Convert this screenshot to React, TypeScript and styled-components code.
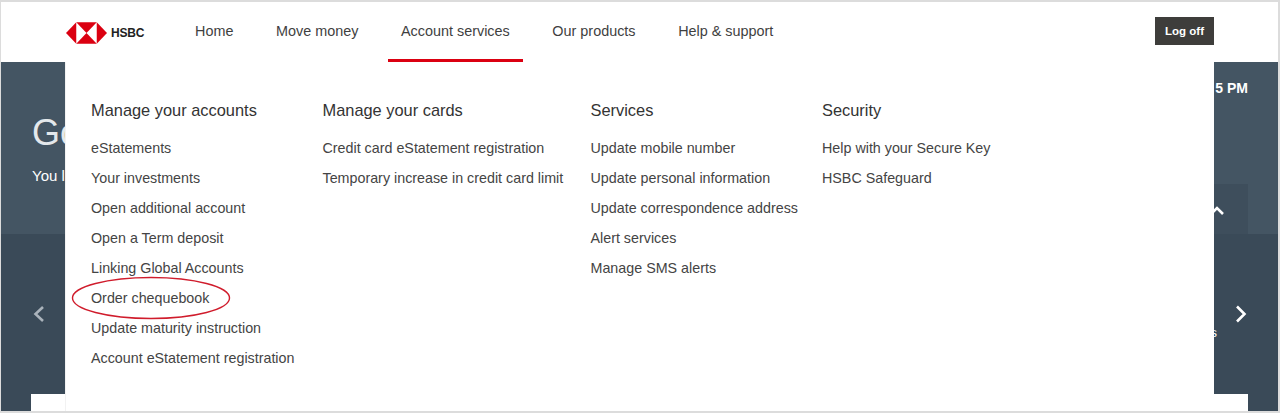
import React from 'react';
import styled, { createGlobalStyle } from 'styled-components';

const GlobalStyle = createGlobalStyle`
  html, body {
    margin: 0;
    padding: 0;
    background: #fff;
  }
  * {
    box-sizing: border-box;
  }
`;

const Frame = styled.div`
  position: relative;
  width: 1280px;
  height: 413px;
  overflow: hidden;
  display: flex;
  flex-direction: column;
  border: 2px solid #dcdcdc;
  border-width: 2px 2px 2px 1px;
  font-family: 'Liberation Sans', Arial, sans-serif;
  color: #333;
`;

const Header = styled.header`
  flex: 0 0 60px;
  display: flex;
  align-items: stretch;
  padding: 0 64px 0 64px;
  background: #fff;
`;

const LogoLink = styled.div`
  width: 117px;
  display: flex;
  align-items: center;
  gap: 4px;
  padding: 2px 0 0 1px;
`;

const LogoText = styled.span`
  font-size: 12px;
  font-weight: 700;
  color: #222;
  letter-spacing: -0.2px;
`;

const Nav = styled.nav`
  display: flex;
  gap: 16.6px;
  flex: 1;
`;

const NavItem = styled.div<{ $active?: boolean }>`
  display: flex;
  align-items: center;
  padding: 1px 13px 0;
  font-size: 14.4px;
  color: #3f3f3f;
  border-bottom: 3px solid ${props => (props.$active ? '#db0011' : 'transparent')};
`;

const LogOff = styled.button`
  align-self: flex-start;
  margin-top: 15px;
  width: 59px;
  height: 28px;
  border: 0;
  padding: 0;
  background: #3e3d3b;
  color: #fff;
  font-family: inherit;
  font-size: 11.5px;
  font-weight: 700;
`;

const Hero = styled.section`
  flex: 1;
  display: flex;
  flex-direction: column;
  background: #3a4a58;
  color: #fff;
`;

const Greeting = styled.div`
  flex: 0 0 172px;
  display: flex;
  justify-content: space-between;
  padding: 0 30px 0 31px;
  background: #445563;
`;

const GreetingLeft = styled.div`
  padding-top: 49px;
`;

const Title = styled.div`
  font-size: 36px;
  font-weight: 300;
  line-height: 44px;
  color: #e4e8eb;
`;

const Subtitle = styled.div`
  margin-top: 12px;
  font-size: 15px;
`;

const GreetingRight = styled.div`
  display: flex;
  flex-direction: column;
  align-items: flex-end;
`;

const Clock = styled.div`
  margin-top: 18px;
  font-size: 14px;
  font-weight: 700;
`;

const Collapse = styled.div`
  margin-top: 88px;
  width: 120px;
  height: 50px;
  display: flex;
  align-items: center;
  justify-content: flex-end;
  padding: 3px 22px 0 0;
  background: #3e4e5c;
`;

const Carousel = styled.div`
  flex: 1;
  display: flex;
  flex-direction: column;
  padding: 0 30px;
`;

const ArrowRow = styled.div`
  position: relative;
  flex: 1;
  display: flex;
  align-items: center;
  justify-content: space-between;
  margin: 0 -2px 0 -1px;
`;

const PeekLabel = styled.span`
  position: absolute;
  right: 33px;
  top: 91px;
  font-size: 13px;
  color: #fff;
`;

const CardTop = styled.div`
  flex: 0 0 17px;
  background: #fff;
`;

const Menu = styled.div`
  position: absolute;
  left: 64px;
  top: 60px;
  width: 1149px;
  height: 351px;
  display: grid;
  grid-template-columns: 231.5px 268px 231.5px 1fr;
  padding: 38px 0 0 25px;
  background: #fff;
  border-left: 1px solid #f2f2f2;
`;

const Column = styled.div`
  display: flex;
  flex-direction: column;
`;

const ColumnTitle = styled.div`
  font-size: 16.4px;
  line-height: 20px;
  color: #333;
  margin-bottom: 13px;
`;

const MenuLink = styled.a`
  font-size: 14.3px;
  line-height: 30px;
  color: #444;
`;

const Annotation = styled.svg`
  position: absolute;
  left: 70px;
  top: 274px;
`;

const Chevron = ({ dir, color }: { dir: 'left' | 'right' | 'up'; color: string }) => {
  const paths = {
    left: 'M13 2 L5.5 9 L13 16',
    right: 'M5 1.5 L12.5 9 L5 16.5',
    up: 'M3 12 L9 6 L15 12',
  };
  return (
    <svg width="18" height="18" viewBox="0 0 18 18" fill="none">
      <path d={paths[dir]} stroke={color} strokeWidth="2.6" />
    </svg>
  );
};

const HsbcMark = () => (
  <svg width="41" height="22" viewBox="0 0 42 22">
    <rect x="10.5" y="0" width="21" height="22" fill="#fff" />
    <path d="M10.5 0 L0 11 L10.5 22 Z" fill="#db0011" />
    <path d="M31.5 0 L42 11 L31.5 22 Z" fill="#db0011" />
    <path d="M10.5 0 H31.5 L21 11 Z" fill="#db0011" />
    <path d="M10.5 22 H31.5 L21 11 Z" fill="#db0011" />
  </svg>
);

const columns = [
  {
    title: 'Manage your accounts',
    links: [
      'eStatements',
      'Your investments',
      'Open additional account',
      'Open a Term deposit',
      'Linking Global Accounts',
      'Order chequebook',
      'Update maturity instruction',
      'Account eStatement registration',
    ],
  },
  {
    title: 'Manage your cards',
    links: ['Credit card eStatement registration', 'Temporary increase in credit card limit'],
  },
  {
    title: 'Services',
    links: [
      'Update mobile number',
      'Update personal information',
      'Update correspondence address',
      'Alert services',
      'Manage SMS alerts',
    ],
  },
  {
    title: 'Security',
    links: ['Help with your Secure Key', 'HSBC Safeguard'],
  },
];

const navItems = ['Home', 'Move money', 'Account services', 'Our products', 'Help & support'];

export default function App() {
  return (
    <Frame>
      <GlobalStyle />
      <Header>
        <LogoLink>
          <HsbcMark />
          <LogoText>HSBC</LogoText>
        </LogoLink>
        <Nav>
          {navItems.map(item => (
            <NavItem key={item} $active={item === 'Account services'}>
              {item}
            </NavItem>
          ))}
        </Nav>
        <LogOff>Log off</LogOff>
      </Header>
      <Hero>
        <Greeting>
          <GreetingLeft>
            <Title>Go</Title>
            <Subtitle>You l</Subtitle>
          </GreetingLeft>
          <GreetingRight>
            <Clock>5 PM</Clock>
            <Collapse>
              <Chevron dir="up" color="#fff" />
            </Collapse>
          </GreetingRight>
        </Greeting>
        <Carousel>
          <ArrowRow>
            <Chevron dir="left" color="#aab3bb" />
            <PeekLabel>s</PeekLabel>
            <Chevron dir="right" color="#fff" />
          </ArrowRow>
          <CardTop />
        </Carousel>
      </Hero>
      <Menu>
        {columns.map(col => (
          <Column key={col.title}>
            <ColumnTitle>{col.title}</ColumnTitle>
            {col.links.map(link => (
              <MenuLink key={link}>{link}</MenuLink>
            ))}
          </Column>
        ))}
      </Menu>
      <Annotation width="162" height="46" viewBox="0 0 162 46" fill="none">
        <ellipse cx="80" cy="22" rx="78.5" ry="20.5" stroke="#d01c2c" strokeWidth="1.4" />
      </Annotation>
    </Frame>
  );
}
